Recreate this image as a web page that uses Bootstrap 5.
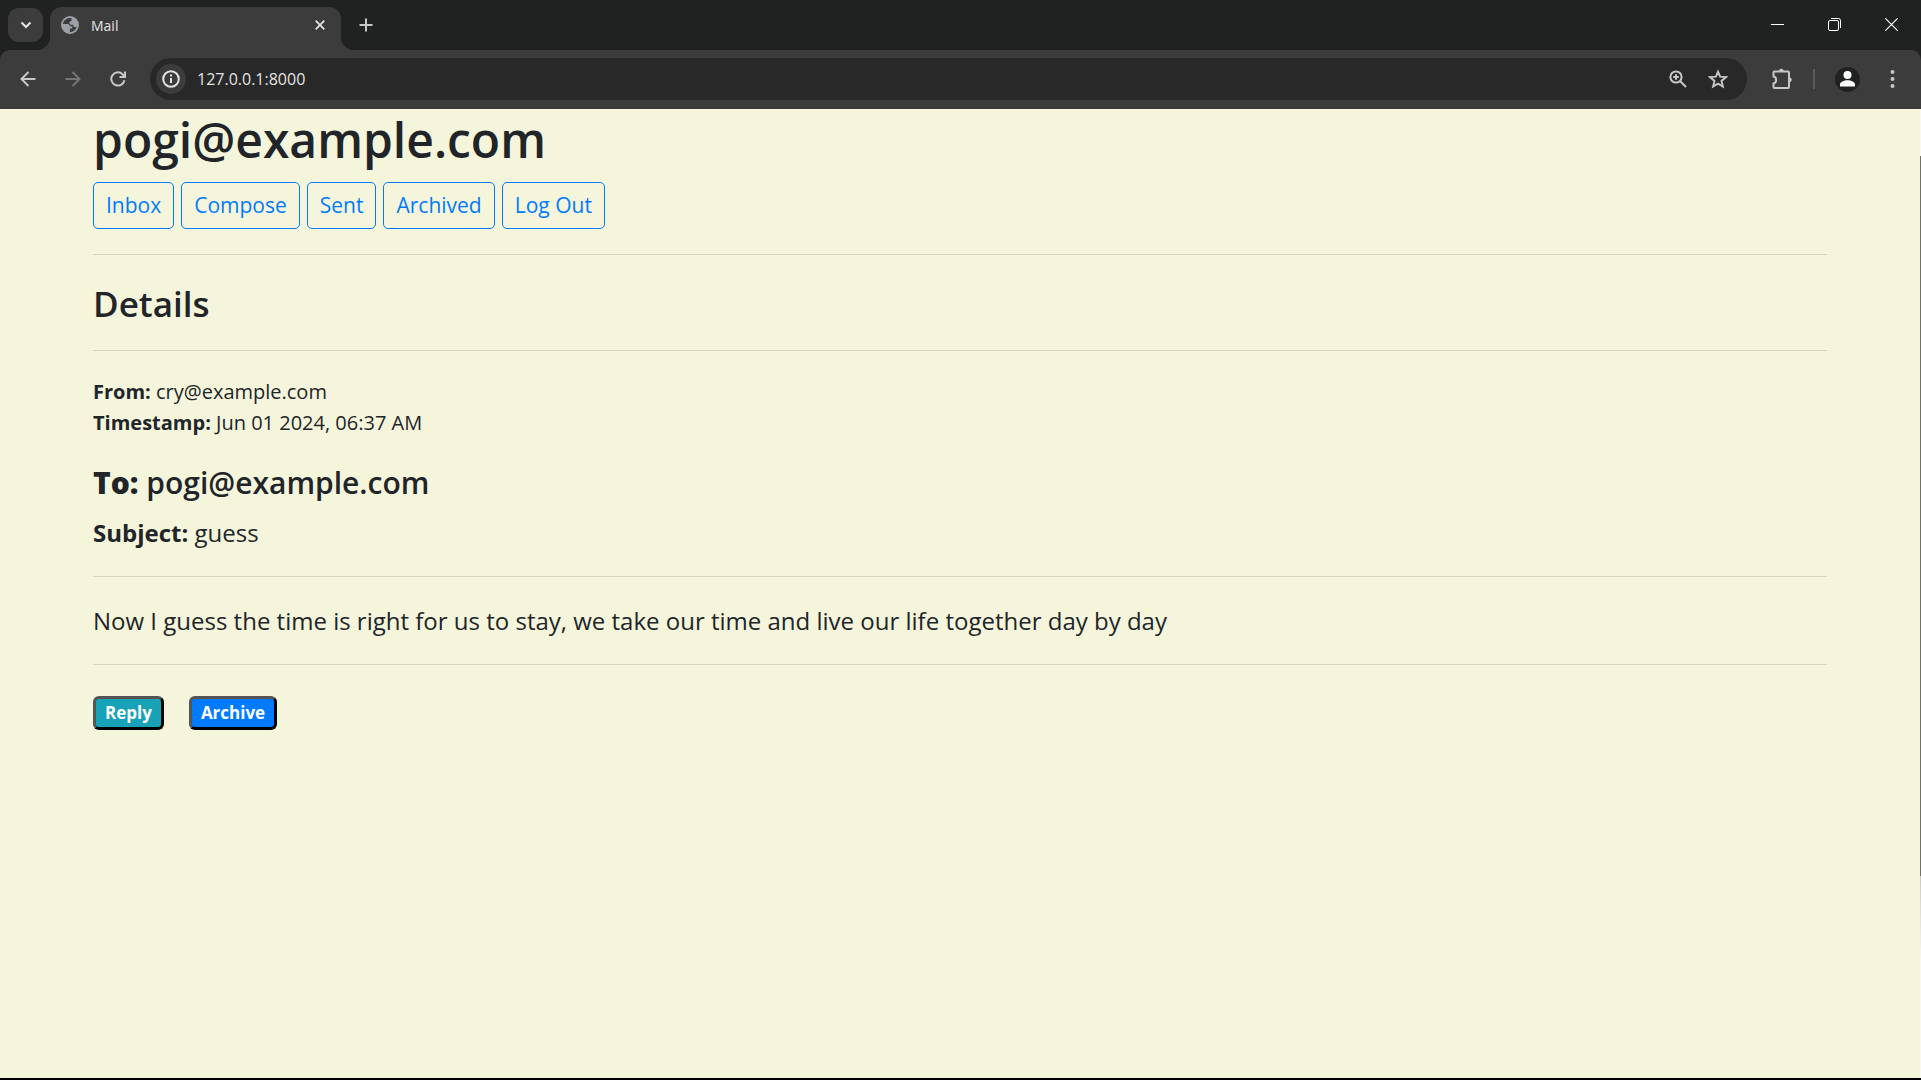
<!DOCTYPE html>
<html lang="en">
<head>
<meta charset="utf-8">
<meta name="viewport" content="width=device-width, initial-scale=1">
<title>Mail</title>
<link rel="stylesheet" href="https://cdn.jsdelivr.net/npm/bootstrap@5.3.0/dist/css/bootstrap.min.css">
<style>
body{background:#f5f5dc;color:#212529;font-family:"Open Sans","Noto Sans",sans-serif;font-size:20px;line-height:31px}
svg{display:block;flex:none}
.tabstrip{background:#202222;height:50px;padding:7px 1px 0 8px}
.chrome-btn{background:none;border:0;padding:0;color:#c7c7c7;display:flex;align-items:center;justify-content:center;flex:none}
.tab-search{width:35px;height:34px;margin-top:1px;border-radius:11px;background:#3c3c3c;color:#e8e8e8}
.page-tab{width:291px;height:43px;margin-left:7px;padding:0 13px 7px 11px;border-radius:12px 12px 0 0;background:#3c3c3c;color:#e3e3e3;font-size:14px;position:relative}
.page-tab::before,.page-tab::after{content:"";position:absolute;bottom:0;width:14px;height:14px}
.page-tab::before{right:100%;background:radial-gradient(circle at 0 0,transparent 14px,#3c3c3c 15px)}
.page-tab::after{left:100%;background:radial-gradient(circle at 100% 0,transparent 14px,#3c3c3c 15px)}
.tab-title{margin-left:12px}
.tab-close{width:16px;height:16px;color:#e3e3e3}
.new-tab{width:34px;height:36px;margin-left:8px}
.win-btn{width:57px;height:34px;color:#fff}
.toolbar-wrap{background:#202222}
.toolbar{background:#3c3c3c;height:59px;border-radius:10px 10px 0 0;padding:0 26px 1px 13px}
.nav-icon{width:30px;height:30px;margin-right:15px}
.dimmed{color:#757575}
.omnibox{background:#282828;height:42px;border-radius:21px;margin-left:2px;padding:0 19px 0 6px}
.site-info{width:30px;height:30px;border-radius:50%;background:#3c3c3c;color:#e3e3e3}
.address{background:none;border:0;outline:0;padding:0;margin-left:11px;color:#e3e3e3;font-size:16px;min-width:0}
.star-btn{margin-left:21px}
.ext-btn{margin-left:24px}
.divider{width:2px;height:20px;margin:0 20px;background:#5a5a5a}
.avatar{width:25px;height:25px;border-radius:50%;background:#202222}
.menu-btn{margin-left:30px}
.viewport{border-bottom:2px solid #000}
.mail-page{padding:1px 93px 0 93px}
.scroll-edge{width:1px;background:linear-gradient(#f8f8f4 0 47px,#6f7268 47px 767px,#c9c9c5 767px,#f8f8f4 850px)}
.mail-page h1{font-size:48px;line-height:60px;margin:0 0 12px;font-weight:600}
.mail-page h2{font-size:35px;line-height:48px;margin:0 0 22px;font-weight:600}
.mail-page h3{font-size:30px;line-height:38px;margin:26px 0 12px;font-weight:600}
.mail-page hr{margin:25px 0;border-color:#000;opacity:.12}
.mail-page h2 + hr{margin-top:0}
.mail-nav{gap:7px}
.mail-nav .btn{--bs-btn-color:#007bff;--bs-btn-border-color:#007bff;--bs-btn-padding-x:12px;--bs-btn-padding-y:7px;--bs-btn-border-radius:5px;font-size:21px;line-height:31px}
.large-text{font-size:24px;line-height:37px;margin:0}
.mail-actions{gap:25px;padding-top:6px}
.mail-actions button{border:3px outset #000;border-radius:6px;color:#fff;font-size:17px;font-weight:700;line-height:24px;padding:2px 9px}
.reply-btn{background:#17a2b8}
.archive-btn{background:#007bff}
</style>
<script src="https://cdn.jsdelivr.net/npm/bootstrap@5.3.0/dist/js/bootstrap.bundle.min.js"></script>
</head>
<body class="d-flex flex-column min-vh-100">
<header>
  <div class="tabstrip d-flex">
    <button class="chrome-btn tab-search" aria-label="Search tabs"><svg width="12" height="8" viewBox="0 0 12 8" fill="none" stroke="currentColor" stroke-width="2"><path d="M1.500 1.500 6 6l4.500-4.500"/></svg></button>
    <div class="page-tab d-flex align-items-center">
      <svg width="18" height="18" viewBox="0 0 18 18"><circle cx="9" cy="9" r="9" fill="#9aa0a6"/><path d="M8.200 1.900C5 2.200 2.300 4.800 1.900 8h4.600c1.500 0 2.400 1 2.400 2.300h2.300v2.300H8.900v3.500c1.400 0 3-.4 4.300-1.500 1.300-1 2.300-2.700 2.700-4.300-.7.900-1.600 1.200-2.500.8-1-.4-1.200-1.300-1.200-2.300H9.900c-1 0-1.500-.8-1.500-1.700 0-1.300.8-2.200 2.100-2.200V2.300c-.7-.3-1.500-.4-2.300-.4Z" fill="#3c3c3c"/></svg>
      <span class="flex-grow-1 tab-title">Mail</span>
      <button class="chrome-btn tab-close" aria-label="Close tab"><svg width="10" height="10" viewBox="0 0 10 10" stroke="currentColor" stroke-width="1.800"><path d="m.7.7 8.600 8.600m0-8.600L.7 9.300"/></svg></button>
    </div>
    <button class="chrome-btn new-tab" aria-label="New tab"><svg width="14" height="14" viewBox="0 0 14 14" stroke="currentColor" stroke-width="2"><path d="M7 .5v13M.5 7h13"/></svg></button>
    <div class="d-flex ms-auto">
      <button class="chrome-btn win-btn" aria-label="Minimize"><svg width="13" height="13" viewBox="0 0 13 13"><path d="M0 6h13v1H0z" fill="currentColor"/></svg></button>
      <button class="chrome-btn win-btn" aria-label="Restore"><svg width="13" height="13" viewBox="0 0 13 13" fill="none" stroke="currentColor"><rect x=".5" y="2.500" width="10" height="10" rx="1.500"/><path d="M3 .5h7.500a2 2 0 0 1 2 2V10"/></svg></button>
      <button class="chrome-btn win-btn" aria-label="Close"><svg width="13" height="13" viewBox="0 0 13 13" stroke="currentColor" stroke-width="1.200"><path d="m.3.3 12.400 12.400m0-12.400L.3 12.700"/></svg></button>
    </div>
  </div>
  <div class="toolbar-wrap">
    <div class="toolbar d-flex align-items-center">
      <button class="chrome-btn nav-icon" aria-label="Back"><svg width="16" height="16" viewBox="0 0 16 16" fill="none" stroke="currentColor" stroke-width="2"><path d="M15.500 8H2M8.500 1 1.500 8l7 7"/></svg></button>
      <button class="chrome-btn nav-icon dimmed" aria-label="Forward"><svg width="16" height="16" viewBox="0 0 16 16" fill="none" stroke="currentColor" stroke-width="2"><path d="M.5 8H14M7.500 1l7 7-7 7"/></svg></button>
      <button class="chrome-btn nav-icon" aria-label="Reload"><svg width="16" height="16" viewBox="0 0 16 16" fill="none" stroke="currentColor" stroke-width="2"><path d="M14.400 9.200A6.600 6.600 0 1 1 12.800 3.500L14.800 5.500M15 .5v5.500H9.500"/></svg></button>
      <div class="omnibox d-flex align-items-center flex-grow-1">
        <button class="chrome-btn site-info" aria-label="View site information"><svg width="18" height="18" viewBox="0 0 18 18" fill="none" stroke="currentColor" stroke-width="2"><circle cx="9" cy="9" r="7.800"/><path d="M9 8v5M9 4.600v2"/></svg></button>
        <input class="address flex-grow-1" type="text" aria-label="Address" value="127.0.0.1:8000">
        <button class="chrome-btn" aria-label="Zoom"><svg width="18" height="18" viewBox="0 0 18 18" fill="none" stroke="currentColor" stroke-width="2"><circle cx="7" cy="7" r="5.600"/><path d="m11 11 6 6M7 4.200v5.600M4.200 7h5.600"/></svg></button>
        <button class="chrome-btn star-btn" aria-label="Bookmark this page"><svg width="20" height="20" viewBox="0 0 20 20" fill="none" stroke="currentColor" stroke-width="1.900"><path d="m10 2.600 2.100 5 5.900.5-4.500 3.800 1.400 5.700-4.900-3-4.900 3 1.400-5.700L2 8.100l5.900-.5Z"/></svg></button>
      </div>
      <button class="chrome-btn ext-btn" aria-label="Extensions"><svg width="22" height="22" viewBox="0 0 22 22" fill="none" stroke="currentColor" stroke-width="2"><path d="M2.500 4.500Q2.500 3.500 3.500 3.500H17Q18 3.500 18 4.500V19Q18 20 17 20H3.500Q2.500 20 2.500 19V15.500C6 15 6 9 2.500 8.500Z"/><path d="M8 3a2.300 2.300 0 0 1 4.600 0ZM18.500 9.500a2.300 2.300 0 0 1 0 4.600Z" fill="currentColor" stroke="none"/></svg></button>
      <span class="divider"></span>
      <button class="chrome-btn avatar" aria-label="Profile"><svg width="15" height="16" viewBox="0 0 15 16" fill="#fff"><circle cx="7.500" cy="4" r="4"/><path d="M0 15.500v-2C0 11 4 9.300 7.500 9.300S15 11 15 13.500v2Z"/></svg></button>
      <button class="chrome-btn menu-btn" aria-label="Menu"><svg width="5" height="18" viewBox="0 0 5 18" fill="currentColor"><circle cx="2.500" cy="2" r="2"/><circle cx="2.500" cy="9" r="2"/><circle cx="2.500" cy="16" r="2"/></svg></button>
    </div>
  </div>
</header>
<div class="viewport d-flex flex-grow-1">
  <main class="mail-page flex-grow-1">
    <h1>pogi@example.com</h1>
    <nav class="mail-nav d-flex flex-wrap" aria-label="Mailbox">
      <button class="btn btn-outline-primary">Inbox</button>
      <button class="btn btn-outline-primary">Compose</button>
      <button class="btn btn-outline-primary">Sent</button>
      <button class="btn btn-outline-primary">Archived</button>
      <a class="btn btn-outline-primary" href="#">Log Out</a>
    </nav>
    <hr>
    <h2>Details</h2>
    <hr>
    <div><strong>From:</strong> cry@example.com</div>
    <div><strong>Timestamp:</strong> Jun 01 2024, 06:37 AM</div>
    <h3><strong>To:</strong> pogi@example.com</h3>
    <p class="large-text"><strong>Subject:</strong> guess</p>
    <hr>
    <p class="large-text">Now I guess the time is right for us to stay, we take our time and live our life together day by day</p>
    <hr>
    <div class="mail-actions d-flex">
      <button class="reply-btn">Reply</button>
      <button class="archive-btn">Archive</button>
    </div>
  </main>
  <div class="scroll-edge"></div>
</div>
</body>
</html>
